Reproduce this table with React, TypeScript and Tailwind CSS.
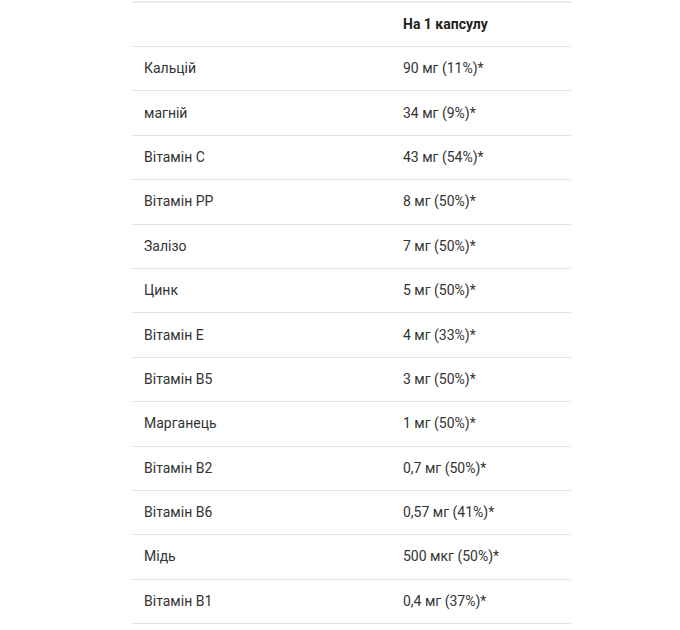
import React from "react";

const rows: [string, string][] = [
  ["Кальцій", "90 мг (11%)*"],
  ["магній", "34 мг (9%)*"],
  ["Вітамін С", "43 мг (54%)*"],
  ["Вітамін PP", "8 мг (50%)*"],
  ["Залізо", "7 мг (50%)*"],
  ["Цинк", "5 мг (50%)*"],
  ["Вітамін Е", "4 мг (33%)*"],
  ["Вітамін В5", "3 мг (50%)*"],
  ["Марганець", "1 мг (50%)*"],
  ["Вітамін В2", "0,7 мг (50%)*"],
  ["Вітамін В6", "0,57 мг (41%)*"],
  ["Мідь", "500 мкг (50%)*"],
  ["Вітамін В1", "0,4 мг (37%)*"],
];

export default function App() {
  return (
    <div className="w-[680px] h-[630px] bg-white overflow-hidden" style={{ fontFamily: "Roboto, 'Noto Sans', sans-serif" }}>
      <div className="ml-[132px] mt-px w-[439px] border-t-2 border-[#ececec] text-[14px] text-[#333]">
        <div className="flex h-[44px] items-center border-b border-[#e3e3e3]">
          <div className="w-[271px]" />
          <div className="font-bold text-[#222]">На 1 капсулу</div>
        </div>
        {rows.map(([a, b]) => (
          <div key={a} className="flex h-[44.4px] items-center border-b border-[#e3e3e3]">
            <div className="w-[271px] pl-[12px]">{a}</div>
            <div>{b}</div>
          </div>
        ))}
      </div>
    </div>
  );
}
